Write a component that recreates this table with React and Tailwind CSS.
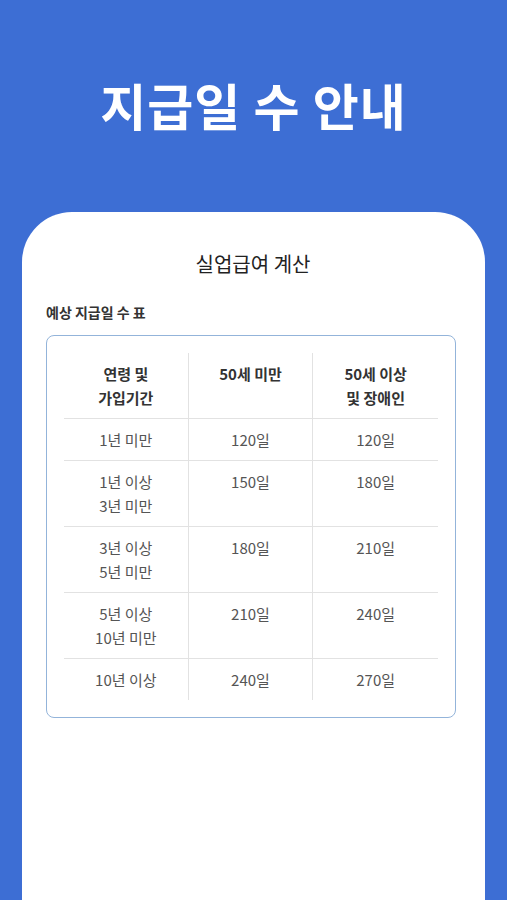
import React from 'react';

const rows = [
    { label: ['1년 미만'], under: '120일', over: '120일' },
    { label: ['1년 이상', '3년 미만'], under: '150일', over: '180일' },
    { label: ['3년 이상', '5년 미만'], under: '180일', over: '210일' },
    { label: ['5년 이상', '10년 미만'], under: '210일', over: '240일' },
    { label: ['10년 이상'], under: '240일', over: '270일' },
];

const font = { fontFamily: '"Noto Sans CJK KR", "Noto Sans", sans-serif' };

function Cell({ children, className = '' }) {
    return (
        <div className={`py-[8.5px] text-center text-[15px] leading-[24px] ${className}`}>
            {children}
        </div>
    );
}

export default function App() {
    return (
        <div className="w-full min-h-screen bg-[#3d6ed4] flex flex-col" style={font}>
            {/* header */}
            <div className="h-[212px] flex items-center justify-center pb-[3px]">
                <h1 className="text-white text-[50px] font-bold tracking-[1px]">지급일 수 안내</h1>
            </div>

            {/* white sheet */}
            <div className="flex-1 mx-[22px] bg-white rounded-t-[50px] pl-6 pr-[29px] pt-[38px]">
                <h2 className="text-center text-[20px] leading-7 text-[#222] pl-1">실업급여 계산</h2>
                <p className="mt-[24px] text-[14px] leading-5 font-semibold text-[#333]">예상 지급일 수 표</p>

                <div className="mt-[13px] border border-[#93b4da] rounded-lg p-[17px]">
                    <div className="grid grid-cols-3">
                        <Cell className="font-semibold text-[#333] border-r border-[#e2e2e2]">
                            연령 및<br />가입기간
                        </Cell>
                        <Cell className="font-semibold text-[#333] border-r border-[#e2e2e2]">50세 미만</Cell>
                        <Cell className="font-semibold text-[#333]">
                            50세 이상<br />및 장애인
                        </Cell>

                        {rows.map((r, i) => (
                            <React.Fragment key={i}>
                                <Cell className="text-[#555] border-t border-r border-[#e2e2e2]">
                                    {r.label.map((l, j) => (
                                        <div key={j}>{l}</div>
                                    ))}
                                </Cell>
                                <Cell className="text-[#555] border-t border-r border-[#e2e2e2]">{r.under}</Cell>
                                <Cell className="text-[#555] border-t border-[#e2e2e2]">{r.over}</Cell>
                            </React.Fragment>
                        ))}
                    </div>
                </div>
            </div>
        </div>
    );
}
